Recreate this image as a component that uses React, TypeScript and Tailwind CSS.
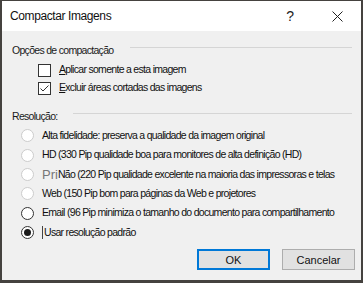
import React from 'react';

const font = { fontFamily: '"Liberation Sans", Arial, sans-serif' };

const Radio = ({ state }: { state: 'disabled' | 'off' | 'on' }) => (
  <span
    className={`flex h-[13px] w-[13px] shrink-0 items-center justify-center rounded-full border bg-white ${
      state === 'disabled' ? 'border-[#cccccc]' : 'border-[#333333]'
    }`}
  >
    {state === 'on' && <span className="h-[7px] w-[7px] rounded-full bg-[#1a1a1a]" />}
  </span>
);

const Checkbox = ({ checked }: { checked?: boolean }) => (
  <span className="flex h-[13px] w-[13px] shrink-0 items-center justify-center border border-[#333333] bg-white">
    {checked && (
      <svg width="11" height="11" viewBox="0 0 11 11" fill="none">
        <path d="M1.5 5.5 L4 8 L9.5 2.5" stroke="#333" strokeWidth="1" />
      </svg>
    )}
  </span>
);

const GroupHeader = ({ label, textWidth }: { label: string; textWidth: string }) => (
  <div className="flex h-[14px] items-start pl-[10px] pr-[9px]">
    <span className={`shrink-0 whitespace-nowrap text-[10.5px] leading-[14px] tracking-[-0.7px] text-[#1a1a1a] ${textWidth}`}>
      {label}
    </span>
    <span className="mt-[4px] h-px flex-1 bg-[#d5d5d5]" />
  </div>
);

const resolutions = [
  { state: 'disabled', text: 'Alta fidelidade: preserva a qualidade da imagem original' },
  { state: 'disabled', text: 'HD (330 Pip qualidade boa para monitores de alta definição (HD)' },
  { state: 'disabled', text: 'Não (220 Pip qualidade excelente na maioria das impressoras e telas', glitch: true },
  { state: 'disabled', text: 'Web (150 Pip bom para páginas da Web e projetores' },
  { state: 'off', text: 'Email (96 Pip minimiza o tamanho do documento para compartilhamento' },
  { state: 'on', text: 'Usar resolução padrão', focus: true },
] as const;

export default function App() {
  return (
    <div className="h-[283px] w-[363px] bg-[#45423f] pl-[2px] pr-[2px] pt-[1px]" style={font}>
      <div className="flex h-[279px] w-[359px] flex-col bg-[#f0f0f0]">
        {/* barra de título */}
        <div className="flex h-[30px] items-center bg-white pl-[8px]">
          <span className="text-[12px] tracking-[-0.4px] text-[#111]">Compactar Imagens</span>
          <span className="ml-auto mr-[38px] text-[14px] text-[#222]">?</span>
          <svg className="mr-[18px]" width="11" height="11" viewBox="0 0 11 11">
            <path d="M0.5 0.5 L10.5 10.5 M10.5 0.5 L0.5 10.5" stroke="#222" strokeWidth="1" />
          </svg>
        </div>

        <div className="mt-[12px]">
          <GroupHeader label="Opções de compactação" textWidth="w-[118px]" />
        </div>

        <div className="mt-[4px] flex flex-col pl-[36px] text-[10.5px] tracking-[-0.7px] text-[#111]">
          <label className="flex h-[18px] items-center gap-[8px]">
            <Checkbox />
            <span><span className="underline">A</span>plicar somente a esta imagem</span>
          </label>
          <label className="flex h-[18px] items-center gap-[8px]">
            <Checkbox checked />
            <span><span className="underline">E</span>xcluir áreas cortadas das imagens</span>
          </label>
        </div>

        <div className="mt-[12px]">
          <GroupHeader label="Resolução:" textWidth="w-[61px]" />
        </div>

        <div className="mt-[3px] flex flex-col pl-[19px] text-[10.5px] tracking-[-0.7px] text-[#111]">
          {resolutions.map((r, i) => (
            <div key={i} className="flex h-[19.4px] items-center gap-[8px]">
              <Radio state={r.state} />
              <span className="flex items-center whitespace-nowrap">
                {'glitch' in r && r.glitch && (
                  <span className="text-[13px] tracking-normal text-[#777]">Pri</span>
                )}
                {'focus' in r && r.focus && <span className="mr-[1px] h-[13px] w-px bg-[#444]" />}
                {r.text}
              </span>
            </div>
          ))}
        </div>

        <div className="mt-[7px] flex justify-end gap-[12px] pr-[6px] text-[11px] text-[#111]">
          <button className="h-[21px] w-[73px] border-2 border-[#0078d7] bg-[#e1e1e1]">OK</button>
          <button className="h-[21px] w-[73px] border border-[#adadad] bg-[#e1e1e1]">Cancelar</button>
        </div>
      </div>
    </div>
  );
}
